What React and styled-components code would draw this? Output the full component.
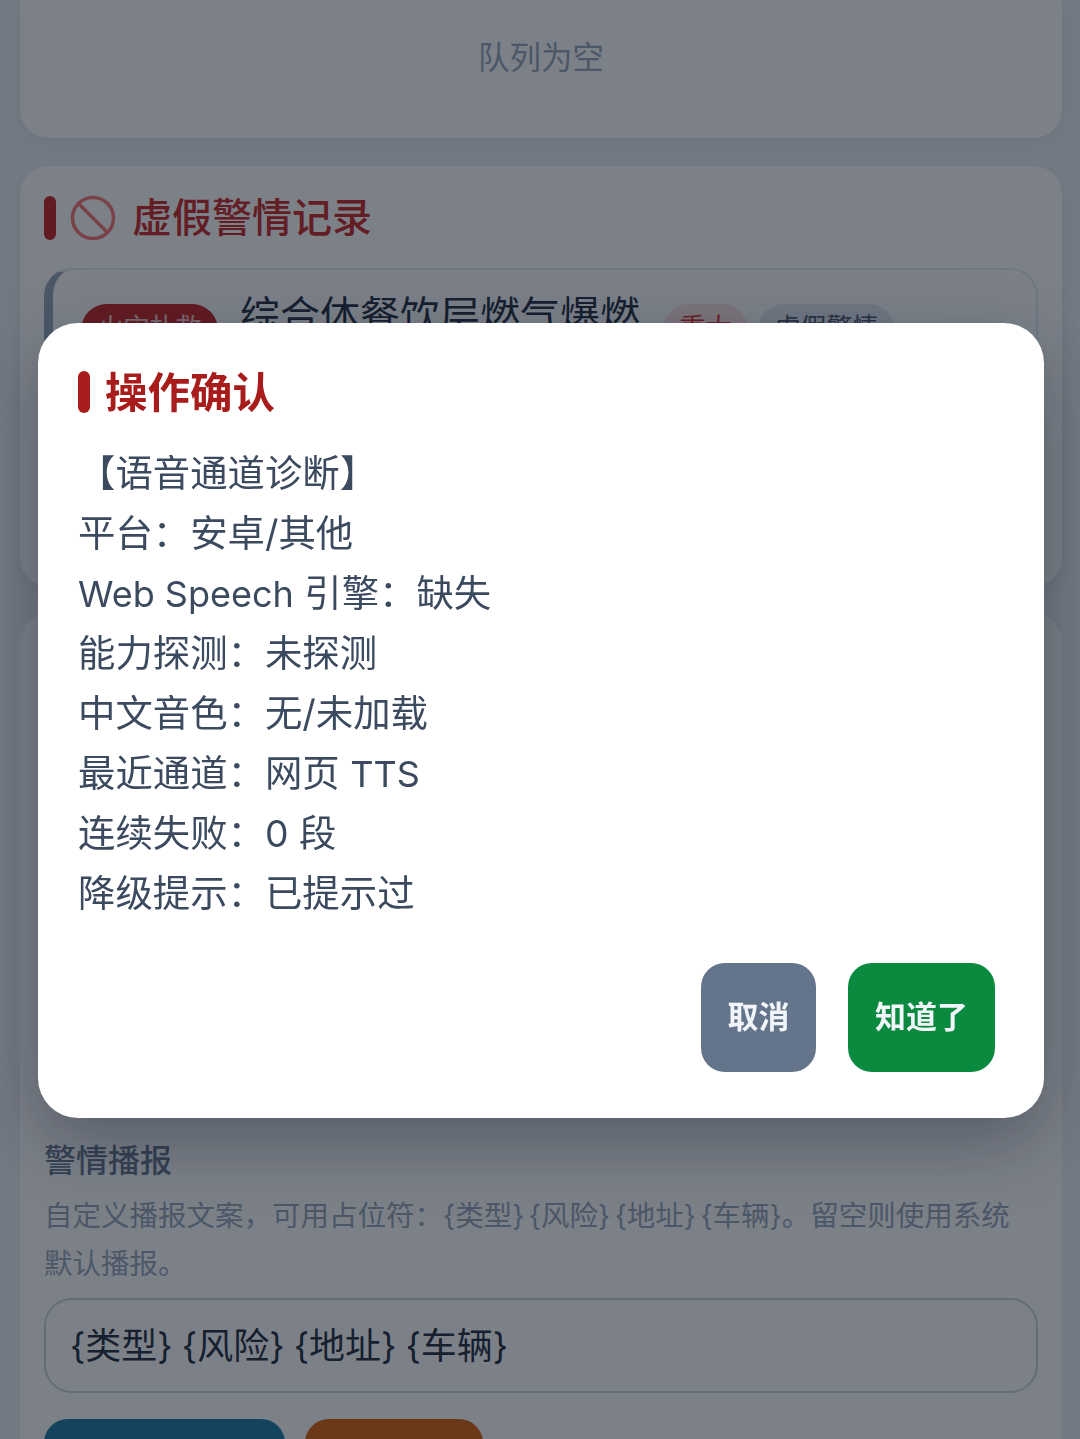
import styled, { createGlobalStyle } from 'styled-components';

const GlobalStyle = createGlobalStyle`
html, body {
    margin: 0;
    padding: 0;
    height: 1439px;
    overflow: hidden;
    background: #f1f5f9;
}
* {
    box-sizing: border-box;
}
body {
    font-family: "Inter", "Noto Sans CJK SC", sans-serif;
}
`

const Page = styled.div`
width: 1080px;
height: 1439px;
overflow: hidden;
padding: 0 18px 0 20px;
background-color: #ebeff3;
`

const QueueCard = styled.div`
height: 138px;
background-color: #fff;
border-radius: 0 0 28px 28px;
box-shadow: 0 4px 16px rgba(15, 23, 42, 0.08);
display: flex;
justify-content: center;
padding-top: 36px;
color: #94a3b8;
font-size: 31.5px;
line-height: 44px;
`

const Card = styled.div`
margin-top: 28px;
height: 420px;
background-color: #fff;
border-radius: 28px;
box-shadow: 0 4px 16px rgba(15, 23, 42, 0.08);
padding: 30px 24px 0;
`

const SectionTitle = styled.div`
display: flex;
align-items: center;
height: 44px;
color: #c82424;
font-size: 40px;
font-weight: 500;

svg {
    margin: 0 16px 0 14px;
    flex-shrink: 0;
}

span:last-child {
    margin-bottom: 6px;
}
`

const Bar = styled.span`
width: 12px;
height: ${(p) => p.$h}px;
border-radius: 6px;
background-color: ${(p) => p.$color};
flex-shrink: 0;
`

const RecordRow = styled.div`
margin-top: 28px;
height: 300px;
border: 2px solid #e2e8f0;
border-left: 9px solid #94a3b8;
border-radius: 28px;
padding: 18px 28px;
display: flex;
align-items: flex-start;
`

const Pill = styled.span`
height: 60px;
margin-top: 16px;
padding: 4px 16.5px;
border-radius: 26px;
font-size: 26px;
line-height: 40px;
background-color: ${(p) => p.$bg};
color: ${(p) => p.$fg};
margin-right: ${(p) => p.$mr}px;
`

const RecordName = styled.span`
font-size: 40px;
line-height: 56px;
color: #1e293b;
margin-right: 23px;
`

const SettingsCard = styled.div`
margin-top: 28px;
height: 900px;
background-color: #fff;
border-radius: 28px;
padding: 525px 24px 0;
`

const FieldLabel = styled.div`
font-size: 32px;
line-height: 44px;
font-weight: 500;
color: #64748b;
`

const FieldHint = styled.div`
margin-top: 9px;
font-size: 28.5px;
line-height: 48px;
word-spacing: -3.5px;
color: #94a3b8;
`

const Input = styled.div`
margin-top: 10px;
height: 95px;
border: 2px solid #cbd5e1;
border-radius: 28px;
padding: 0 24px 6px;
display: flex;
align-items: center;
font-size: 36px;
word-spacing: -1px;
color: #1e293b;
`

const ButtonRow = styled.div`
margin-top: 26px;
display: flex;
gap: 20px;
`

const PageButton = styled.div`
width: ${(p) => p.$w}px;
height: 80px;
border-radius: 24px;
background-color: ${(p) => p.$bg};
`

const Overlay = styled.div`
position: fixed;
inset: 0;
width: 1080px;
height: 1439px;
background-color: rgba(16, 26, 38, 0.55);
display: flex;
align-items: flex-start;
padding: 323px 36px 0 38px;
`

const Modal = styled.div`
width: 100%;
height: 795px;
background-color: #fff;
border-radius: 40px;
box-shadow: 0 24px 70px rgba(15, 23, 42, 0.35);
padding: 48px 49px 46px 40px;
display: flex;
flex-direction: column;
`

const ModalTitle = styled.div`
display: flex;
align-items: center;
gap: 15px;
height: 42px;
color: #a81c1c;
font-size: 42.5px;
font-weight: 700;

span:last-child {
    margin-bottom: 6px;
}
`

const ModalBody = styled.div`
margin-top: 31px;
color: #3b4a5f;
font-size: 37.4px;
flex: 1;
`

const ModalLine = styled.div`
height: 60px;
line-height: 60px;
`

const Latin = styled.span`
font-size: 36px;
`

const ModalActions = styled.div`
display: flex;
justify-content: flex-end;
gap: 32px;
`

const ModalButton = styled.button`
height: 109px;
padding: 0 26px 6px;
border: none;
border-radius: 24px;
background-color: ${(p) => p.$bg};
color: #f1f5f9;
font-family: inherit;
font-size: 31px;
font-weight: 700;
min-width: ${(p) => p.$w}px;
`

function App() {
    return (
        <>
            <GlobalStyle />
            <Page>
                <QueueCard>队列为空</QueueCard>
                <Card>
                    <SectionTitle>
                        <Bar $h={44} $color="#c81e1e" />
                        <svg width="46" height="46" viewBox="0 0 46 46" fill="none" stroke="#f87171" strokeWidth="3.5">
                            <circle cx="23" cy="23" r="20.5" />
                            <path d="M8.5 8.5 37.5 37.5" />
                        </svg>
                        <span>虚假警情记录</span>
                    </SectionTitle>
                    <RecordRow>
                        <Pill $bg="#c81e1e" $fg="#fecaca" $mr={22}>火灾扑救</Pill>
                        <RecordName>综合体餐饮层燃气爆燃</RecordName>
                        <Pill $bg="#fee2e2" $fg="#dc2626" $mr={10}>重大</Pill>
                        <Pill $bg="#e2e8f0" $fg="#475569" $mr={0}>虚假警情</Pill>
                    </RecordRow>
                </Card>
                <SettingsCard>
                    <FieldLabel>警情播报</FieldLabel>
                    <FieldHint>自定义播报文案，可用占位符：{'{类型} {风险} {地址} {车辆}'}。留空则使用系统默认播报。</FieldHint>
                    <Input>{'{类型} {风险} {地址} {车辆}'}</Input>
                    <ButtonRow>
                        <PageButton $w={241} $bg="#1a76a0" />
                        <PageButton $w={178} $bg="#dc5f08" />
                    </ButtonRow>
                </SettingsCard>
            </Page>
            <Overlay>
                <Modal>
                    <ModalTitle>
                        <Bar $h={42} $color="#a81c1c" />
                        <span>操作确认</span>
                    </ModalTitle>
                    <ModalBody>
                        <ModalLine>【语音通道诊断】</ModalLine>
                        <ModalLine>平台：安卓/其他</ModalLine>
                        <ModalLine><Latin>Web Speech</Latin> 引擎：缺失</ModalLine>
                        <ModalLine>能力探测：未探测</ModalLine>
                        <ModalLine>中文音色：无/未加载</ModalLine>
                        <ModalLine>最近通道：网页 <Latin>TTS</Latin></ModalLine>
                        <ModalLine>连续失败：0 段</ModalLine>
                        <ModalLine>降级提示：已提示过</ModalLine>
                    </ModalBody>
                    <ModalActions>
                        <ModalButton $bg="#64748b" $w={115}>取消</ModalButton>
                        <ModalButton $bg="#0a8a3e" $w={147}>知道了</ModalButton>
                    </ModalActions>
                </Modal>
            </Overlay>
        </>
    );
}

export default App;
